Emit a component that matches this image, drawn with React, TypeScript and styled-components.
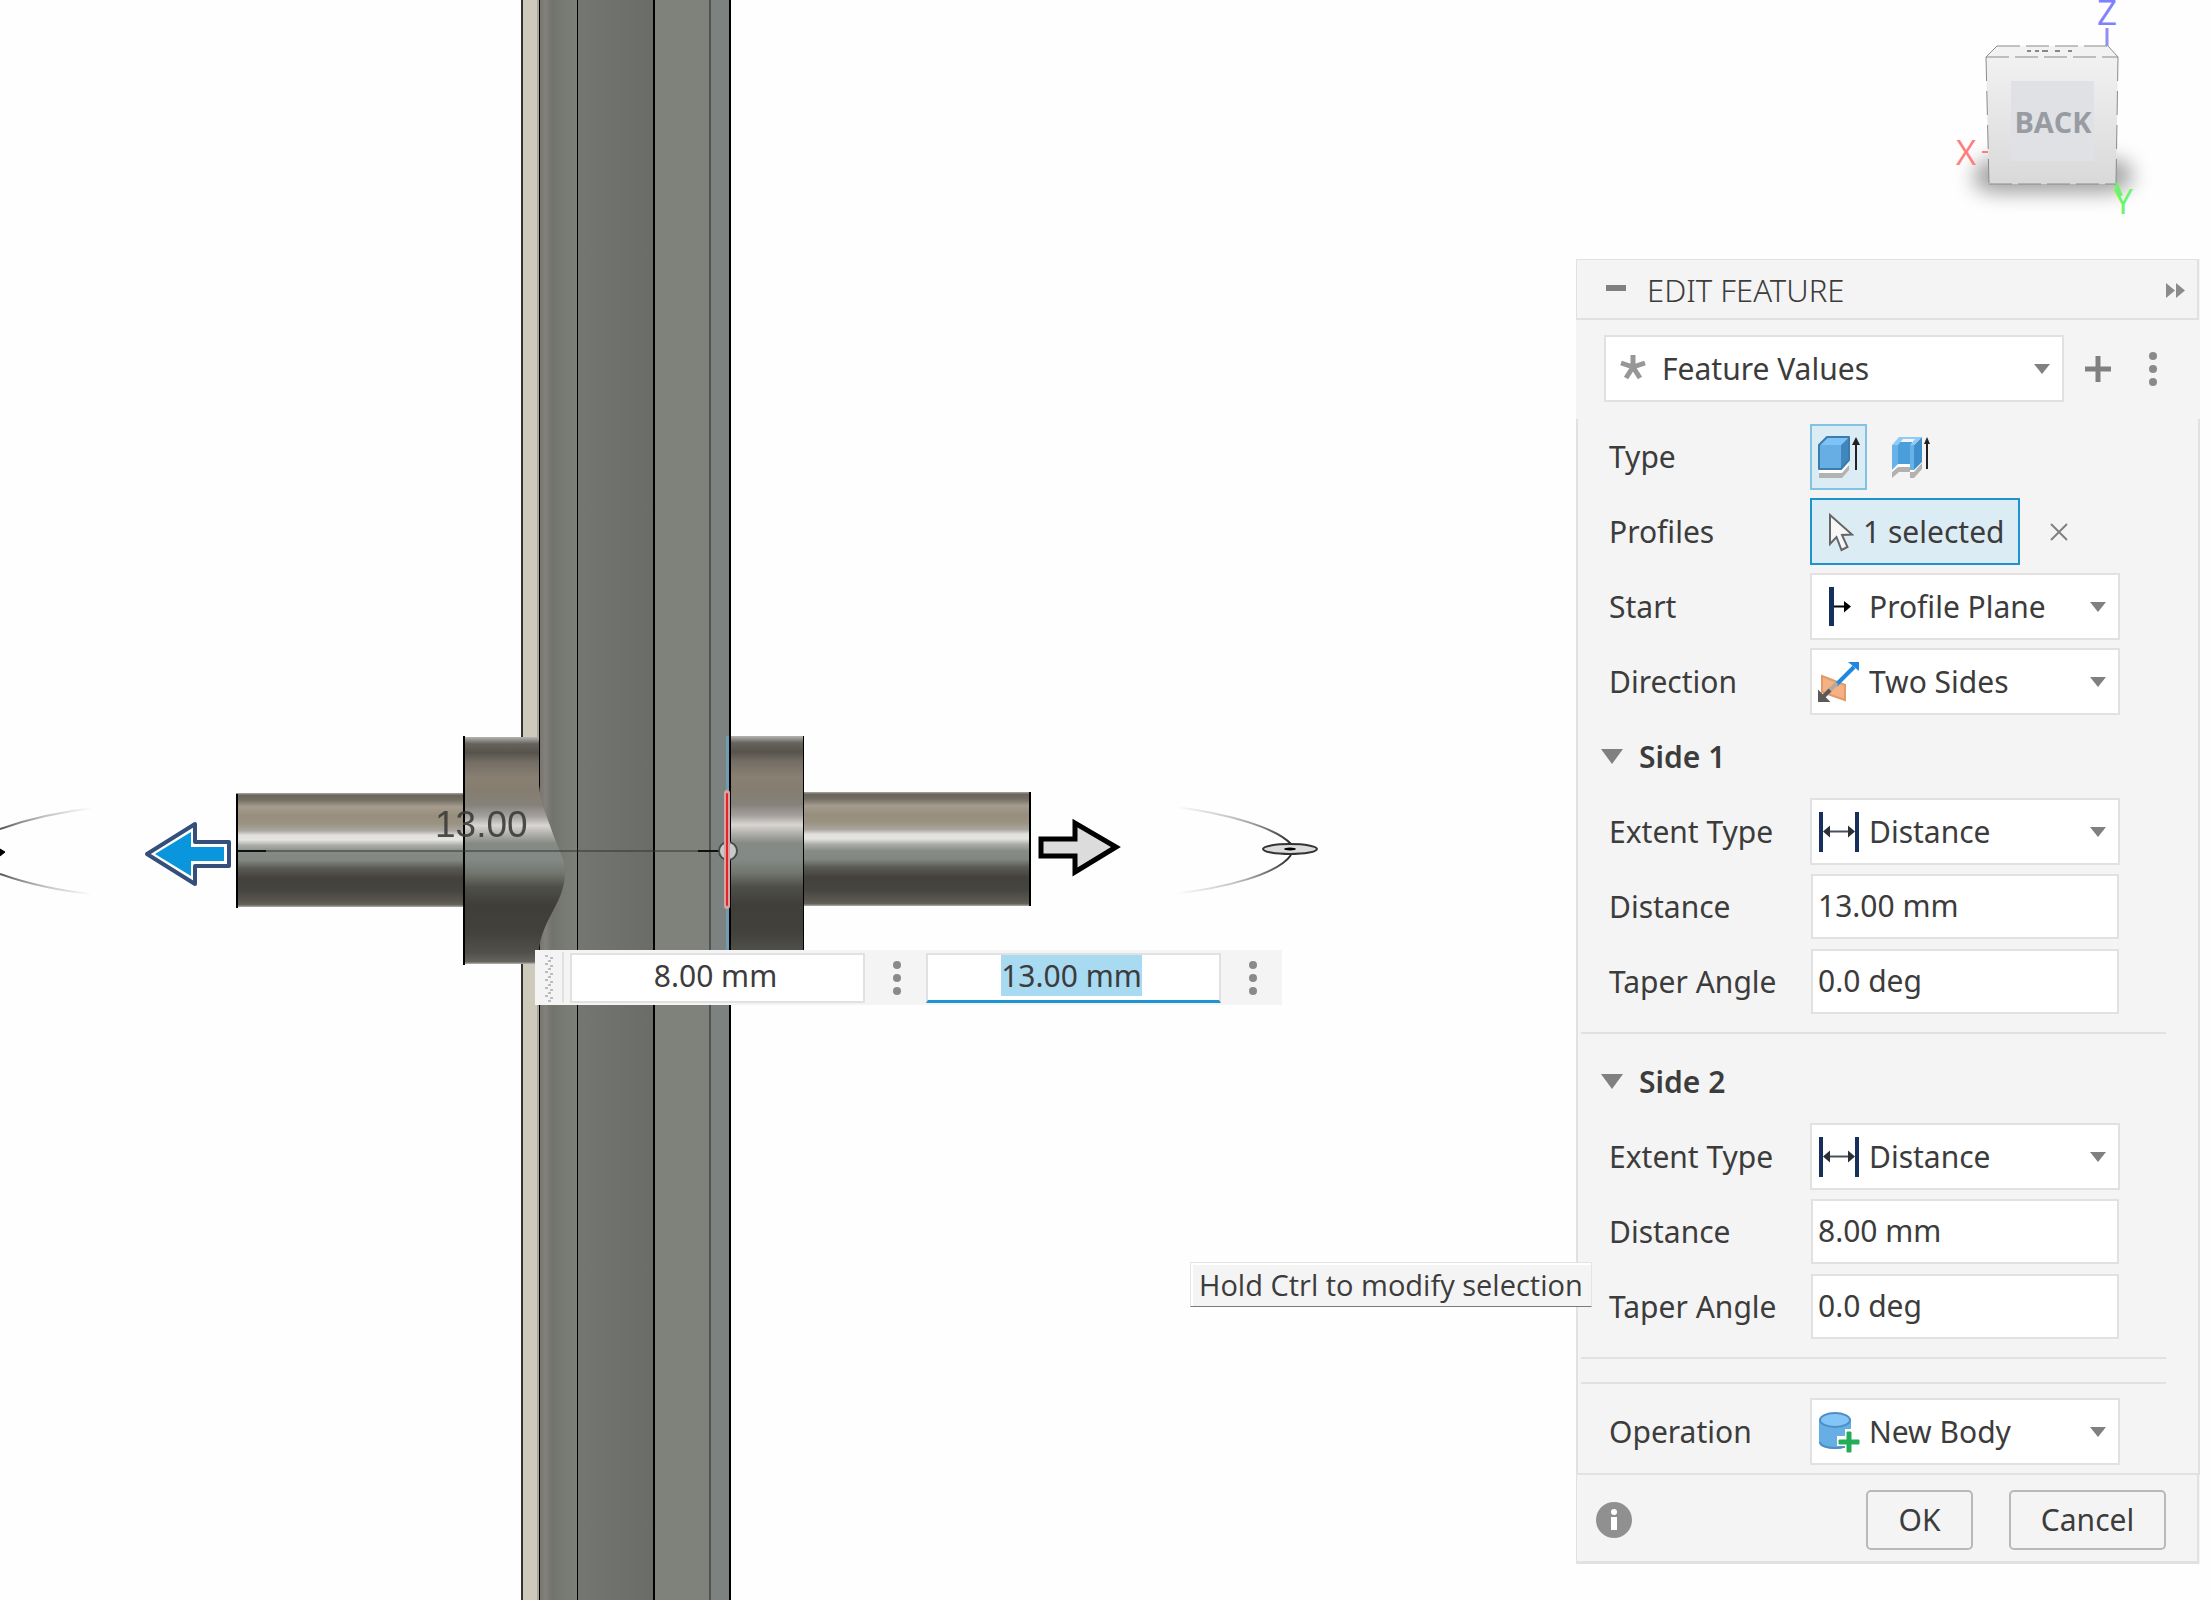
import React, { useEffect, useRef } from "react";
import styled, { createGlobalStyle, css } from "styled-components";

const ink = "#3c3c3c";
const surface = "#f4f4f4";
const line = "#e1e1e1";
const accent = "#1d94cf";
const glyph = "#808080";
const uiFont = '"Noto Sans", "Open Sans", sans-serif';

const GlobalStyle = createGlobalStyle`
  *, *::before, *::after { box-sizing: border-box; }
  html, body { margin: 0; padding: 0; background: #fefefe; }
  body, button, input, select { font-family: ${uiFont}; font-size: 30px; color: ${ink}; }
`;

const Page = styled.main`
  position: relative;
  min-height: 100vh;
  display: flex;
  justify-content: flex-end;
  overflow: hidden;
`;

const Scene = styled.svg`
  position: absolute;
  inset: 0;
  width: 100%;
  height: 100%;
`;

const SideColumn = styled.aside`
  position: relative;
  width: 634px;
  padding-right: 10px;
`;

const CubeArea = styled.div`
  height: 259px;
  display: flex;
  justify-content: flex-end;
  margin-right: -10px;
`;

const Panel = styled.form`
  background: ${surface};
`;

const PanelHeader = styled.header`
  height: 61px;
  display: flex;
  align-items: center;
  margin-right: 1px;
  padding: 2px 12px 0 28px;
  border: solid ${line};
  border-width: 1px 2px 2px 1px;
`;

const PanelTitle = styled.h1`
  flex: 1;
  margin: 0 0 0 20px;
  font-size: 31px;
  line-height: 40px;
  font-weight: 300;
`;

const IconButton = styled.button`
  display: grid;
  place-items: center;
  padding: 0;
  border: 0;
  background: none;
`;

const ConfigBar = styled.div`
  height: 99px;
  display: flex;
  align-items: flex-start;
  padding: 15px 42px 0 28px;
`;

const ConfigTools = styled.div`
  height: 67px;
  display: flex;
  align-items: center;
  gap: 37px;
  padding-left: 21px;
`;

const PanelBody = styled.div`
  padding-bottom: 4px;
  border: solid ${line};
  border-width: 0 2px 2px;
`;

const Row = styled.div`
  height: 75px;
  display: grid;
  grid-template-columns: 201px 310px;
  align-items: center;
  padding-left: 31px;
`;

const RowLabel = styled.label`
  line-height: 40px;
`;

const RowCaption = styled.span`
  line-height: 40px;
`;

const Inline = styled.div<{ $gap: number }>`
  display: flex;
  align-items: center;
  gap: ${(p) => p.$gap}px;
`;

const box = css`
  height: 67px;
  border: 2px solid ${line};
  border-radius: 0;
  background: #fff;
`;

const SelectFrame = styled.div<{ $wide?: boolean }>`
  ${box}
  width: ${(p) => (p.$wide ? "auto" : "310px")};
  flex: ${(p) => (p.$wide ? "1" : "none")};
  display: grid;
  grid-template-columns: ${(p) => (p.$wide ? "52px" : "54px")} 1fr 28px;
  align-items: center;

  > svg {
    grid-row: 1;
    pointer-events: none;
    z-index: 1;
  }
  > svg:first-child {
    grid-column: 1;
    margin-left: ${(p) => (p.$wide ? "14px" : "6px")};
  }
  > svg:last-child {
    grid-column: 3;
  }
`;

const Select = styled.select<{ $wide?: boolean }>`
  grid-row: 1;
  grid-column: 1 / -1;
  appearance: none;
  height: 63px;
  width: 100%;
  padding: 0 32px 0 ${(p) => (p.$wide ? "56px" : "57px")};
  border: 0;
  border-radius: 0;
  background: none;
  outline: none;
`;

const ValueInput = styled.input`
  ${box}
  height: 65px;
  width: 308px;
  margin-left: 1px;
  padding: 0 5px 3px;
  outline: none;
`;

const TypeButton = styled(IconButton)<{ $active?: boolean }>`
  width: 57px;
  height: 66px;
  border: 2px solid ${(p) => (p.$active ? "#82c3e4" : "transparent")};
  background: ${(p) => (p.$active ? "#dcecf5" : "none")};
`;

const SelectionButton = styled.button`
  width: 210px;
  height: 67px;
  display: flex;
  align-items: center;
  gap: 9px;
  padding: 0 0 0 16px;
  border: 2px solid ${accent};
  background: #dcecf5;
`;

const SectionToggle = styled.button`
  width: 100%;
  height: 75px;
  display: flex;
  align-items: center;
  gap: 16px;
  padding: 0 0 0 23px;
  border: 0;
  background: none;
  font-weight: 600;
`;

const Divider = styled.hr`
  height: 2px;
  margin: 0 32px 0 3px;
  border: 0;
  background: ${line};
`;

const DividerSlot = styled.div`
  height: 25px;
  padding-top: 13px;
`;

const PanelFooter = styled.footer`
  height: 89px;
  display: flex;
  align-items: center;
  gap: 36px;
  margin-right: 1px;
  padding: 3px 31px 0 19px;
  border: solid ${line};
  border-width: 0 2px 3px 1px;
`;

const FooterButton = styled.button<{ $primary?: boolean }>`
  width: ${(p) => (p.$primary ? 107 : 157)}px;
  height: 60px;
  padding: 0;
  border: 2px solid #b9b9b9;
  border-radius: 5px;
  background: ${surface};
  line-height: 40px;
`;

const InfoButton = styled(IconButton)`
  margin-right: auto;
`;

const ValueBar = styled.div`
  position: absolute;
  left: 535px;
  top: 950px;
  height: 55px;
  display: flex;
  align-items: center;
  background: ${surface};
`;

const Grip = styled.div`
  width: 29px;
  height: 51px;
  margin-right: 6px;
  display: grid;
  place-items: center;
  border-right: 2px solid ${line};
`;

const BarInput = styled.input<{ $active?: boolean }>`
  width: 295px;
  height: 50px;
  padding: 0 4px 4px 0;
  border: 2px solid ${line};
  border-bottom: ${(p) => (p.$active ? `3px solid ${accent}` : `2px solid ${line}`)};
  border-radius: 0;
  background: #fff;
  text-align: center;
  outline: none;

  &::selection {
    background: #a8daf1;
    color: ${ink};
  }
`;

const BarMenu = styled(IconButton)`
  width: 61px;
  height: 55px;
  padding-left: 2px;
`;

const Tooltip = styled.div`
  position: absolute;
  left: 1190px;
  top: 1262px;
  z-index: 2;
  padding: 1px 8px 0;
  border: 1px solid #e4e4e4;
  border-bottom: 1px solid #7b7b7b;
  box-shadow: inset 0 2px 0 #fff, inset 2px 0 0 #fff;
  background: ${surface};
  font-family: "Open Sans", "Noto Sans", sans-serif;
  font-size: 29px;
  line-height: 42px;
  white-space: nowrap;
`;

const Caret = () => (
  <svg width="16" height="10" viewBox="0 0 16 10" aria-hidden="true">
    <path d="M0 0h16L8 10z" fill={glyph} />
  </svg>
);

const Dots = () => (
  <svg width="10" height="36" viewBox="0 0 10 36" aria-hidden="true" fill="#8a8a8a">
    <circle cx="5" cy="5" r="4" />
    <circle cx="5" cy="18" r="4" />
    <circle cx="5" cy="31" r="4" />
  </svg>
);

const StarIcon = () => (
  <svg width="26" height="28" viewBox="0 0 26 28" aria-hidden="true">
    <path d="M13 12V0M13 12L1 8M13 12l12-4M13 12L6 23M13 12l7 11" stroke="#979797" strokeWidth="5" fill="none" />
  </svg>
);

const ExtrudeIcon = () => (
  <svg width="42" height="42" viewBox="0 0 42 42" aria-hidden="true">
    <path d="M1 36h22l8-8v6l-7 8H1z" fill="#b4b2b1" />
    <path d="M1 34h22l8-8v3l-7 8H1z" fill="#fff" />
    <path d="M1 9l8-8h22l-8 8z" fill="#7fc2f5" />
    <path d="M23 9l8-8v23l-8 9z" fill="#3f87bd" />
    <rect x="1" y="9" width="22" height="24" fill="#67aee5" />
    <path d="M1 9l8-8h22v23l-8 9H1z" fill="none" stroke="#3a7cae" strokeWidth="2" strokeLinejoin="round" />
    <path d="M38 34V5" stroke="#222" strokeWidth="2" />
    <path d="M34 9l4-8 4 8z" fill="#222" />
  </svg>
);

const ThinExtrudeIcon = () => (
  <svg width="40" height="42" viewBox="0 0 40 42" aria-hidden="true">
    <path d="M1 36l6-6h12v5h4l8-9v7l-8 9h-4v-6H8l-7 6z" fill="#b4b2b1" />
    <path d="M1 32l6-5h12v5h4l8-9v4l-8 9h-4v-5H7l-6 5z" fill="#fff" />
    <path d="M7 6h14v22H7z" fill="#4a9fda" />
    <path d="M1 9h6v19l-6 6z" fill="#68b2ea" />
    <path d="M19 9h4v25h-4z" fill="#68b2ea" />
    <path d="M23 9l8-8v25l-8 8z" fill="#3f8fca" />
    <path d="M1 9l7-8h23l-8 8h-4l5-6H12L7 9z" fill="#8ecbf6" />
    <path d="M36 33V5" stroke="#222" strokeWidth="2" />
    <path d="M33 8l3-7 3 7z" fill="#222" />
  </svg>
);

const CursorIcon = () => (
  <svg width="26" height="40" viewBox="0 0 26 40" aria-hidden="true">
    <path d="M2 3v29l6.500-7 5 13 6-3-5.500-12 10-.5z" fill="#f7f7f7" stroke="#666" strokeWidth="2" />
  </svg>
);

const PlaneIcon = () => (
  <svg width="42" height="42" viewBox="0 0 42 42" aria-hidden="true">
    <rect x="11" y="1" width="5" height="39" fill="#15305c" />
    <path d="M16 20.500h11" stroke="#000" strokeWidth="2" />
    <path d="M26 15l7 5.500-7 6z" fill="#000" />
  </svg>
);

const TwoSidesIcon = () => (
  <svg width="42" height="42" viewBox="0 0 42 42" aria-hidden="true">
    <path d="M4 15l23 9v15L4 31z" fill="#f5b183" stroke="#e29a68" strokeWidth="2" />
    <path d="M18 24L36 6" stroke="#1e88e0" strokeWidth="4" />
    <path d="M30 1h11v9z" fill="#1e88e0" />
    <path d="M19 22L10 31" stroke="#b7a898" strokeWidth="4" />
    <path d="M12 29L5 36" stroke="#5a5a5a" strokeWidth="4" />
    <path d="M1 31v9h9z" fill="#5a5a5a" stroke="#5a5a5a" strokeWidth="2" />
  </svg>
);

const DistanceIcon = () => (
  <svg width="42" height="42" viewBox="0 0 42 42" aria-hidden="true">
    <rect x="1" y="1" width="4" height="40" fill="#15305c" />
    <rect x="37" y="1" width="4" height="40" fill="#15305c" />
    <path d="M8 20.500h27" stroke="#4b5056" strokeWidth="2" />
    <path d="M5 20.500l7-6v12zM37 20.500l-7-6v12z" fill="#2b3038" />
  </svg>
);

const NewBodyIcon = () => (
  <svg width="42" height="42" viewBox="0 0 42 42" aria-hidden="true">
    <path d="M1 9v22c0 9 32 9 32 0V9z" fill="#67aee5" />
    <path d="M2 31c0 8 30 8 30 0" fill="none" stroke="#4c8fc6" strokeWidth="2" />
    <ellipse cx="17" cy="9" rx="15" ry="7" fill="#84c5f8" stroke="#4c8fc6" strokeWidth="2" />
    <path d="M27 18h9v7h7v10h-7v7h-9v-7h-8V25h8z" fill="#fff" />
    <path d="M29 21h4v8h8v4h-8v8h-4v-8h-8v-4h8z" fill="#22ad57" stroke="#22ad57" strokeWidth="1" />
  </svg>
);

const icons = {
  plane: PlaneIcon,
  twoSides: TwoSidesIcon,
  distance: DistanceIcon,
  newBody: NewBodyIcon,
};

type SelectRowProps = { id: string; label: string; value: string; icon: keyof typeof icons };

const SelectRow = ({ id, label, value, icon }: SelectRowProps) => {
  const Icon = icons[icon];
  return (
    <Row>
      <RowLabel htmlFor={id}>{label}</RowLabel>
      <SelectFrame>
        <Icon />
        <Select id={id} defaultValue={value}>
          <option>{value}</option>
        </Select>
        <Caret />
      </SelectFrame>
    </Row>
  );
};

const InputRow = ({ id, label, value }: { id: string; label: string; value: string }) => (
  <Row>
    <RowLabel htmlFor={id}>{label}</RowLabel>
    <ValueInput id={id} defaultValue={value} />
  </Row>
);

const SideSection = ({ number, distance }: { number: number; distance: string }) => (
  <>
    <SectionToggle type="button" aria-expanded="true">
      <svg width="22" height="15" viewBox="0 0 22 15" aria-hidden="true">
        <path d="M0 0h22L11 15z" fill={glyph} />
      </svg>
      Side {number}
    </SectionToggle>
    <SelectRow id={`extent-${number}`} label="Extent Type" value="Distance" icon="distance" />
    <InputRow id={`distance-${number}`} label="Distance" value={distance} />
    <InputRow id={`taper-${number}`} label="Taper Angle" value="0.0 deg" />
    <DividerSlot>
      <Divider />
    </DividerSlot>
  </>
);

const ViewCube = () => (
  <svg width="290" height="240" viewBox="0 0 290 240" role="img" aria-label="View cube">
    <defs>
      <linearGradient id="cubeFace" x1="0" y1="0" x2="0" y2="1">
        <stop offset="0" stopColor="#f1f1f1" />
        <stop offset="1" stopColor="#d9d9d9" />
      </linearGradient>
      <filter id="soft" x="-30%" y="-120%" width="160%" height="340%">
        <feGaussianBlur stdDeviation="10" />
      </filter>
    </defs>
    <path d="M60 160h145l10 20-20 13H72l-20-8z" fill="#000" opacity=".36" filter="url(#soft)" />
    <path d="M187 28v20" stroke="#8f8ff5" strokeWidth="3" />
    <path d="M62 152h6" stroke="#f77f7f" strokeWidth="2" />
    <path d="M195 182l6 14" stroke="#6ff06f" strokeWidth="4" />
    <path d="M66 57l11-11h111l10 11z" fill="#f2f2f2" />
    <path d="M66 57h132l-2 127H69z" fill="url(#cubeFace)" />
    <path d="M77 46h111M66 57h132M69 184h127" stroke="#8b8b8b" strokeWidth="1" strokeDasharray="23 6" fill="none" />
    <path d="M66 57l11-11M198 57l-10-11M66 57l3 127M198 57l-2 127" stroke="#8b8b8b" strokeWidth="1" strokeDasharray="24 10" fill="none" />
    <path d="M107 51h4m4 0h4m3 0h6m7 0h5m8 0h4" stroke="#888" strokeWidth="2" />
    <rect x="91" y="81" width="83" height="80" fill="#dfe1e5" />
    <g fontFamily='"Open Sans", "Noto Sans", sans-serif' textAnchor="middle">
      <text x="133" y="133" fontSize="29" fontWeight="700" fill="#989ba1">BACK</text>
      <g fontSize="35" fontWeight="500">
        <text x="187" y="25" fill="#8080ff">Z</text>
        <text x="46" y="165" fill="#ff7f7f">X</text>
        <text x="203" y="214" fill="#6cf46c">Y</text>
      </g>
    </g>
  </svg>
);

type Stop = [number, string];

const shaftStops: Stop[] = [
  [0, "#a9a69f"], [2, "#6a655b"], [6, "#736d62"], [12, "#a59c8f"], [20, "#978e7d"], [27, "#9b9382"],
  [33, "#aaa7a1"], [37, "#e2e0dc"], [41, "#e6e4e0"], [46, "#a9aba7"], [52, "#868b86"], [59, "#828782"],
  [66, "#5a5a55"], [75, "#43413b"], [86, "#47453f"], [95, "#5a5750"], [98, "#65625a"], [100, "#b0aea9"],
];

const hubStops: Stop[] = [
  [0, "#b5b5b1"], [3, "#66635c"], [7, "#57534b"], [11, "#736d64"], [18, "#898073"], [24, "#857d6f"],
  [30, "#85817b"], [35, "#a5a29e"], [39, "#d8d6d3"], [43, "#adada9"], [47, "#858a85"], [54, "#838985"],
  [60, "#72766f"], [66, "#4f4f49"], [74, "#403e39"], [86, "#43413b"], [95, "#52504a"], [99, "#66635d"], [100, "#b8b6b2"],
];

const beamStops: Stop[] = [
  [0, "#77756e"], [14, "#82817a"], [32, "#72736d"], [60, "#777973"], [100, "#7d7f79"],
];

const Gradient = ({ id, stops, across }: { id: string; stops: Stop[]; across?: boolean }) => (
  <linearGradient id={id} x1="0" y1="0" x2={across ? 1 : 0} y2={across ? 0 : 1}>
    {stops.map(([at, color]) => (
      <stop key={at} offset={`${at}%`} stopColor={color} />
    ))}
  </linearGradient>
);

const ModelScene = () => (
  <Scene role="img" aria-label="Model viewport">
    <defs>
      <Gradient id="shaft" stops={shaftStops} />
      <Gradient id="hub" stops={hubStops} />
      <Gradient id="beam" stops={beamStops} across />
      <Gradient id="web" stops={[[0, "#737671"], [50, "#6f716d"], [100, "#6a6c67"]]} across />
      <linearGradient id="fadeLeft" gradientUnits="userSpaceOnUse" x1="0" y1="0" x2="92" y2="0">
        <stop offset="0" stopColor="#555" />
        <stop offset=".5" stopColor="#888" stopOpacity=".5" />
        <stop offset="1" stopColor="#888" stopOpacity="0" />
      </linearGradient>
      <linearGradient id="fadeRight" gradientUnits="userSpaceOnUse" x1="1176" y1="0" x2="1292" y2="0">
        <stop offset="0" stopColor="#888" stopOpacity="0" />
        <stop offset=".5" stopColor="#888" stopOpacity=".5" />
        <stop offset="1" stopColor="#222" />
      </linearGradient>
    </defs>

    <g>
      <rect x="522" y="0" width="17" height="100%" fill="#cdc9bb" />
      <rect x="521" y="0" width="2" height="100%" fill="#33332f" />
      <rect x="537" y="0" width="2" height="100%" fill="#a9a69b" />
      <rect x="540" y="0" width="38" height="100%" fill="url(#beam)" />
      <rect x="578" y="0" width="76" height="100%" fill="url(#web)" />
      <rect x="654" y="0" width="56" height="100%" fill="#7f817b" />
      <rect x="710" y="0" width="19" height="100%" fill="#7c827f" />
      <rect x="539" y="0" width="1" height="100%" fill="#000" />
      <rect x="577" y="0" width="1" height="100%" fill="#000" />
      <rect x="653" y="0" width="2" height="100%" fill="#000" />
      <rect x="709" y="0" width="2" height="100%" fill="#50524f" />
      <rect x="729" y="0" width="2" height="100%" fill="#000" />
    </g>

    <rect x="236" y="793" width="228" height="114" fill="url(#shaft)" />
    <path
      d="M464 737H539V785C541 806 547 816 553 834C558 848 565 859 565 872C565 886 560 898 554 909C547 922 540 936 539 950V964H464Z"
      fill="url(#hub)"
    />
    <rect x="236" y="794" width="2" height="114" fill="#000" />
    <rect x="463" y="736" width="2" height="229" fill="#000" />
    <rect x="731" y="736" width="73" height="228" fill="url(#hub)" />
    <rect x="804" y="792" width="226" height="114" fill="url(#shaft)" />
    <rect x="803" y="736" width="1" height="228" fill="#000" />
    <rect x="1029" y="792" width="2" height="114" fill="#000" />

    <rect x="726" y="736" width="3" height="228" fill="#6f9cb0" />
    <path d="M238 851h490" stroke="#333" strokeWidth="1" />
    <path d="M238 851h28M698 851h22" stroke="#111" strokeWidth="2" />
    <circle cx="728" cy="851" r="9" fill="#c9c9c9" stroke="#4a4a4a" strokeWidth="2" />
    <rect x="724" y="790" width="6" height="119" rx="3" fill="#d6a3a3" />
    <rect x="726" y="793" width="2" height="113" rx="1" fill="#e3222a" />
    <text x="435" y="837" fontFamily='"Liberation Sans", Arial, sans-serif' fontSize="37" fill="#3c3c3a" opacity=".9">13.00</text>

    <g strokeLinejoin="round">
      <path d="M147 854L195 824V842H229V866H195V884Z" fill="#fff" stroke="#34507a" strokeWidth="4" />
      <path d="M155 854L191 832V847H224V861H191V876Z" fill="#0a96dc" />
    </g>
    <path d="M1041 839H1075V823L1116 847L1075 872V856H1041Z" fill="#dcdcdc" stroke="#000" strokeWidth="5" />

    <path d="M0 829C28 819 58 812 94 808M0 874C28 884 60 891 98 895" fill="none" stroke="url(#fadeLeft)" strokeWidth="2" />
    <path d="M0 849l5 3-5 4z" fill="#000" stroke="#000" strokeWidth="1" />
    <path d="M1176 807C1230 814 1276 828 1291 844M1291 855C1278 874 1226 888 1172 894" fill="none" stroke="url(#fadeRight)" strokeWidth="2" />
    <ellipse cx="1290" cy="849" rx="27" ry="5" fill="#dcdcdc" stroke="#333" strokeWidth="2" />
    <ellipse cx="1290" cy="849" rx="6" ry="1.500" fill="#000" />
  </Scene>
);

const gripRows = [2, 10, 18, 26, 34, 42];

const ValueToolbar = () => {
  const active = useRef<HTMLInputElement>(null);
  useEffect(() => {
    active.current?.focus();
    active.current?.select();
  }, []);
  return (
    <ValueBar>
      <Grip>
        <svg width="10" height="48" viewBox="0 0 10 48" aria-hidden="true">
          {gripRows.map((y) => (
            <path key={y} d={`M1 ${y}h3M6 ${y + 2}h3M4 ${y + 5}h3`} stroke="#bdbdbd" strokeWidth="2" />
          ))}
        </svg>
      </Grip>
      <BarInput aria-label="Side 2 distance" defaultValue="8.00 mm" />
      <BarMenu type="button" aria-label="Side 2 options">
        <Dots />
      </BarMenu>
      <BarInput ref={active} $active aria-label="Side 1 distance" defaultValue="13.00 mm" />
      <BarMenu type="button" aria-label="Side 1 options">
        <Dots />
      </BarMenu>
    </ValueBar>
  );
};

const FeaturePanel = () => (
  <Panel onSubmit={(e) => e.preventDefault()}>
    <PanelHeader>
      <IconButton type="button" aria-label="Collapse">
        <svg width="22" height="14" viewBox="0 0 22 14" aria-hidden="true">
          <rect x="1" y="2" width="20" height="6" fill={glyph} />
        </svg>
      </IconButton>
      <PanelTitle>EDIT FEATURE</PanelTitle>
      <IconButton type="button" aria-label="Expand">
        <svg width="19" height="15" viewBox="0 0 19 15" aria-hidden="true">
          <path d="M0 0l9 7.500L0 15zM10 0l9 7.500-9 7.500z" fill="#8b8b8b" />
        </svg>
      </IconButton>
    </PanelHeader>

    <ConfigBar>
      <SelectFrame $wide>
        <StarIcon />
        <Select $wide aria-label="Configuration" defaultValue="Feature Values">
          <option>Feature Values</option>
        </Select>
        <Caret />
      </SelectFrame>
      <ConfigTools>
        <IconButton type="button" aria-label="Add">
          <svg width="26" height="26" viewBox="0 0 26 26" aria-hidden="true">
            <path d="M13 0v26M0 13h26" stroke={glyph} strokeWidth="5" />
          </svg>
        </IconButton>
        <IconButton type="button" aria-label="More">
          <Dots />
        </IconButton>
      </ConfigTools>
    </ConfigBar>

    <PanelBody>
      <Row>
        <RowCaption>Type</RowCaption>
        <Inline $gap={15}>
          <TypeButton type="button" $active aria-label="Extrude">
            <ExtrudeIcon />
          </TypeButton>
          <TypeButton type="button" aria-label="Thin extrude">
            <ThinExtrudeIcon />
          </TypeButton>
        </Inline>
      </Row>
      <Row>
        <RowCaption>Profiles</RowCaption>
        <Inline $gap={30}>
          <SelectionButton type="button">
            <CursorIcon />1 selected
          </SelectionButton>
          <IconButton type="button" aria-label="Clear selection">
            <svg width="18" height="18" viewBox="0 0 18 18" aria-hidden="true">
              <path d="M1 1l16 16M17 1L1 17" stroke={glyph} strokeWidth="2" />
            </svg>
          </IconButton>
        </Inline>
      </Row>
      <SelectRow id="start" label="Start" value="Profile Plane" icon="plane" />
      <SelectRow id="direction" label="Direction" value="Two Sides" icon="twoSides" />
      <SideSection number={1} distance="13.00 mm" />
      <SideSection number={2} distance="8.00 mm" />
      <DividerSlot>
        <Divider />
      </DividerSlot>
      <SelectRow id="operation" label="Operation" value="New Body" icon="newBody" />
    </PanelBody>

    <PanelFooter>
      <InfoButton type="button" aria-label="Information">
        <svg width="36" height="36" viewBox="0 0 36 36" aria-hidden="true">
          <circle cx="18" cy="18" r="18" fill="#909090" />
          <circle cx="18" cy="10" r="3" fill="#fff" />
          <rect x="15" y="15" width="6" height="13" fill="#fff" />
        </svg>
      </InfoButton>
      <FooterButton type="submit" $primary>OK</FooterButton>
      <FooterButton type="button">Cancel</FooterButton>
    </PanelFooter>
  </Panel>
);

export default function App() {
  return (
    <>
      <GlobalStyle />
      <Page>
        <ModelScene />
        <SideColumn>
          <CubeArea>
            <ViewCube />
          </CubeArea>
          <FeaturePanel />
        </SideColumn>
        <ValueToolbar />
        <Tooltip role="tooltip">Hold Ctrl to modify selection</Tooltip>
      </Page>
    </>
  );
}
